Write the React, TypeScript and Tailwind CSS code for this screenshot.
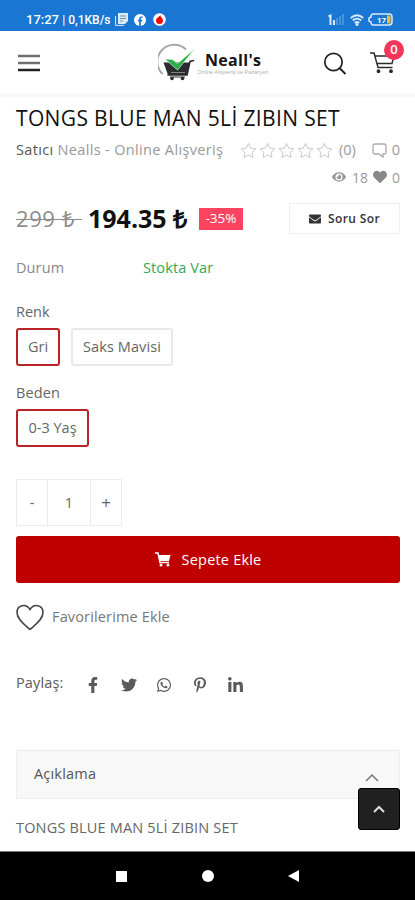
import React from "react";
import { FaEye, FaHeart, FaEnvelope, FaFacebookF, FaTwitter, FaWhatsapp, FaPinterestP, FaLinkedinIn } from "react-icons/fa";

function Logo() {
  return (
    <svg width="38" height="38" viewBox="0 0 38 38" className="shrink-0" fill="none">
      <path d="M4.500 31A15 15 0 0 1 28 6.500" stroke="#a3a8ad" strokeWidth="2" />
      <path d="M5.500 19.500H32L29 32H10Z" fill="#2b2c2f" />
      <path d="M35.500 17.500L32 18.500L29 32H10" stroke="#2b2c2f" strokeWidth="1.600" strokeLinecap="round" />
      <path d="M13 29.500H27" stroke="#999" strokeWidth=".8" />
      <circle cx="14" cy="35.500" r="1.800" fill="#2b2c2f" />
      <circle cx="24.500" cy="35.500" r="1.800" fill="#2b2c2f" />
      <path d="M12 34H27" stroke="#2b2c2f" strokeWidth="1" />
      <path d="M7 16L14.500 16.500L19.500 20.500L37 5.500L19.500 27Z" fill="#27ae45" stroke="#fff" strokeWidth="0.600" />
    </svg>
  );
}

function StatusBar() {
  return (
    <div className="flex h-[31px] items-center bg-[#1976d2] pt-[8px] pl-[26px] pr-[22px] text-white">
      <span className="w-[88px] whitespace-nowrap font-['Roboto'] text-[13px] font-medium leading-4">17:27 <span className="text-[12px]">| 0,1KB/s</span></span>
      <svg width="13" height="13" viewBox="0 0 13 13" className="ml-[1px]">
        <path d="M3 0H13V8L10 11H3Z" fill="#dcecfa" />
        <path d="M5 3H11M5 5.500H11M5 8H8" stroke="#6b8fb0" fill="none" />
        <path d="M.6 3V12.400H9" stroke="#dcecfa" fill="none" />
      </svg>
      <svg width="12" height="12" viewBox="0 0 12 12" className="ml-[6px]">
        <circle cx="6" cy="6" r="6" fill="#fff" />
        <path d="M6 12V4.800Q6 3 8.500 3M4 6.600H8.300" stroke="#1976d2" strokeWidth="1.700" fill="none" />
      </svg>
      <svg width="13" height="13" viewBox="0 0 13 13" className="ml-[7px]">
        <circle cx="6.500" cy="6.500" r="6.300" fill="#fff" />
        <path d="M7.500 2C7 4 10 5 10 7.500A3.500 3.500 0 0 1 3 7.500C3 5 6 4 7.500 2Z" fill="#f00b0b" />
      </svg>
      <svg width="16" height="12" viewBox="0 0 16 12" className="ml-auto">
        <path d="M.5 2.500L2.500 1.500V11M6 6V11" stroke="#d9eafa" strokeWidth="2" fill="none" />
        <path d="M9 4V11M12 2V11M15 0V11" stroke="#69a6e4" strokeWidth="1.200" />
      </svg>
      <svg width="14" height="12" viewBox="0 0 14 12" className="ml-[6px]" fill="none" stroke="#d9eafa" strokeWidth="1.700">
        <path d="M.7 4Q7-1.500 13.300 4M2.800 6.500Q7 2.800 11.200 6.500M4.800 9Q7 7 9.200 9" />
        <circle cx="7" cy="10.500" r=".7" fill="#fff" />
      </svg>
      <svg width="25" height="13" viewBox="0 0 25 13" className="ml-[4px]">
        <path d="M5 1H21Q24 1 24 4V9Q24 12 21 12H5Q3 12 3 9L1 8V5L3 4Q3 1 5 1Z" fill="none" stroke="#d9eafa" strokeWidth="1.500" />
        <path d="M19 2.500H21.500Q22.500 2.500 22.500 4V9Q22.500 10.500 21.500 10.500H19Z" fill="#f5b934" />
        <text x="9" y="9.500" fill="#fff" fontSize="8" fontWeight="700" fontFamily="Roboto">17</text>
      </svg>
    </div>
  );
}

function Header() {
  return (
    <header className="flex h-[66px] items-center border-b-[4px] border-[#f8f8f8] pl-[17px] pr-[15px]">
      <svg width="24" height="18" viewBox="0 0 24 18" className="mt-[2px]">
        <path d="M1 2H23" stroke="#6e6e6e" strokeWidth="2.500" />
        <path d="M1 9H23" stroke="#6e6e6e" strokeWidth="2.500" />
        <path d="M1 16H23" stroke="#222" strokeWidth="2.500" />
      </svg>
      <div className="ml-[117px] flex items-center">
        <Logo />
        <div className="w-[74px] whitespace-nowrap pt-[3px]">
          <div className="pl-[9px] font-['Open_Sans'] text-[16px] font-bold leading-[16px] tracking-[0.3px] text-[#151515]">Neall's</div>
          <div className="pl-[1px] font-['Liberation_Sans'] text-[5.6px] leading-[8px] text-[#b0b0b0]">Online Alışveriş ve Pazaryeri</div>
        </div>
      </div>
      <svg width="24" height="24" viewBox="0 0 24 24" className="ml-auto mt-[3px]" fill="none" stroke="#222" strokeWidth="1.700">
        <circle cx="10.500" cy="10" r="8.700" />
        <path d="M16.500 16L22.500 22" strokeWidth="2" />
      </svg>
      <div className="relative ml-[23px] mt-[2px] h-[24px] w-[30px]">
        <svg width="26" height="24" viewBox="0 0 26 24" fill="none" stroke="#2a2a2a" strokeWidth="1.400">
          <path d="M0 2H4L8 16.500H22.500M5 5H24L22 12.500H7" />
          <circle cx="8.500" cy="20.200" r="1.200" fill="#222" />
          <circle cx="21" cy="20.200" r="1.200" fill="#222" />
        </svg>
        <span className="absolute -top-[11px] left-[14px] flex size-[20px] items-center justify-center rounded-full bg-[#f4365a] text-[13px] font-semibold text-white">0</span>
      </div>
    </header>
  );
}

function Star() {
  return (
    <svg width="19" height="17" viewBox="0 0 19 17" fill="none" stroke="#c9c9c9">
      <path d="M9.500 1.500L11.700 6.100L16.900 6.800L13.100 10.400L14 15.500L9.500 13L5 15.500L5.900 10.400L2.100 6.800L7.300 6.100Z" />
    </svg>
  );
}

function CartIcon() {
  return (
    <svg width="16" height="15" viewBox="0 0 16 15" fill="none" stroke="#fff">
      <path d="M0 1H3L5 10.500H14" strokeWidth="1.500" />
      <path d="M3.500 3H15.500L14 9H4.700Z" fill="#fff" stroke="none" />
      <circle cx="6" cy="13" r="1.500" fill="#fff" stroke="none" />
      <circle cx="13" cy="13" r="1.500" fill="#fff" stroke="none" />
    </svg>
  );
}

export default function App() {
  return (
    <div className="flex h-[900px] w-[415px] flex-col overflow-hidden bg-white font-['Open_Sans',sans-serif] text-[14.5px] text-[#666]">
      <StatusBar />
      <Header />
      <main className="flex h-[754px] shrink-0 flex-col whitespace-nowrap pl-[16px] pr-[15px]">
        <h1 className="h-[42px] text-[21px] leading-[42px] tracking-[0.36px] text-[#111]">TONGS BLUE MAN 5Lİ ZIBIN SET</h1>
        <div className="flex h-[24px] items-center pb-[2px] text-[#999]">
          <span className="w-[223px] tracking-[0.34px]"><span className="text-[#555]">Satıcı</span> Nealls - Online Alışveriş</span>
          <div className="flex">
            <Star /><Star /><Star /><Star /><Star />
          </div>
          <span className="ml-[5px]">(0)</span>
          <svg width="15" height="15" viewBox="0 0 15 15" className="ml-auto mr-[5px]" fill="none" stroke="#aaa" strokeWidth="1.300">
            <path d="M3 1H12Q14 1 14 3V9Q14 11 12 11H11V14L7 11H3Q1 11 1 9V3Q1 1 3 1Z" />
          </svg>
          <span>0</span>
        </div>
        <div className="mt-[2px] flex h-[24px] items-center justify-end text-[#999]">
          <FaEye size={14} />
          <span className="ml-[6px] text-[14px]">18</span>
          <FaHeart size={14} className="ml-[5px] mr-[5px] text-[#888]" />
          <span className="text-[14px]">0</span>
        </div>
        <div className="mt-[14px] flex h-[31px] items-center">
          <span className="w-[72px]"><span className="whitespace-pre text-[22px] tracking-[0.6px] text-[#8c8c8c] line-through decoration-1">299 ₺ </span></span>
          <span className="w-[111px] text-[25px] font-bold text-[#111]">194.35 ₺</span>
          <span className="flex h-[22px] w-[44px] items-center justify-center bg-[#fb4560] text-[13.5px] text-white">-35%</span>
          <button className="ml-auto flex h-[31px] w-[111px] items-center justify-center gap-[7px] border border-[#eee] text-[12px] font-semibold tracking-[0.4px] text-[#333]">
            <FaEnvelope size={12} />Soru Sor
          </button>
        </div>
        <div className="mt-[22px] flex h-[24px] items-center">
          <span className="w-[127px] tracking-[0.1px] text-[#888]">Durum</span>
          <span className="tracking-[0.12px] text-[#34a853]">Stokta Var</span>
        </div>
        <div className="mt-[20px] flex h-[24px] items-center">Renk</div>
        <div className="mt-[4px] flex gap-[11px]">
          <button className="h-[38px] w-[44px] rounded-[3px] border-2 border-[#b92327]">Gri</button>
          <button className="h-[38px] w-[102px] rounded-[3px] border-2 border-[#e9e9e9] tracking-[0.1px]">Saks Mavisi</button>
        </div>
        <div className="mt-[15px] flex h-[24px] items-center tracking-[0.15px]">Beden</div>
        <button className="mt-[4px] h-[38px] w-[73px] rounded-[3px] border-2 border-[#b92327]">0-3 Yaş</button>
        <div className="mt-[32px] flex h-[47px] w-[106px] shrink-0 items-center border border-[#ededed] text-center">
          <span className="w-[30px]">-</span>
          <span className="flex h-full w-[44px] items-center justify-center border-x border-[#ededed]">1</span>
          <span className="w-[30px] text-[17px]">+</span>
        </div>
        <button className="mt-[10px] flex h-[47px] shrink-0 items-center justify-center gap-[11px] rounded-[3px] bg-[#be0000] font-medium tracking-[0.2px] text-white">
          <CartIcon />Sepete Ekle
        </button>
        <div className="mt-[20px] flex h-[28px] items-center gap-[8px] tracking-[0.15px] text-[#777]">
          <svg width="28" height="27" viewBox="0 0 28 27" fill="none" stroke="#444" strokeWidth="1.600">
            <path d="M14 25.500C9 21 1 15.500 1 8.500C1 1 10-1 14 5.500C18-1 27 1 27 8.500C27 15.500 19 21 14 25.500Z" />
          </svg>
          Favorilerime Ekle
        </div>
        <div className="mt-[38px] flex h-[28px] items-center text-[#5a5a5a]">
          <span className="w-[69px] tracking-[0.15px]">Paylaş:</span>
          <div className="flex gap-[19.5px] pt-[4px]">
            <FaFacebookF size={16} /><FaTwitter size={16} /><FaWhatsapp size={16} /><FaPinterestP size={16} /><FaLinkedinIn size={17} />
          </div>
        </div>
        <div className="relative mt-[53px] flex h-[49px] shrink-0 items-center justify-between border border-[#eee] bg-[#f8f8f8] pl-[17px] pr-[20px] text-[#555]">
          <span className="pb-[2px] tracking-[0.2px]">Açıklama</span>
          <svg width="14" height="9" viewBox="0 0 14 9" className="mt-[6px]" fill="none" stroke="#777" strokeWidth="1.500"><path d="M1 8L7 2L13 8" /></svg>
          <button className="absolute -right-px top-[37px] flex size-[42px] items-center justify-center rounded-[3px] border border-black bg-[#202020]">
            <svg width="12" height="8" viewBox="0 0 12 8" fill="none" stroke="#ddd" strokeWidth="2"><path d="M1 7L6 2L11 7" /></svg>
          </button>
        </div>
        <p className="mt-[17px] leading-[24px] tracking-[0.18px]">TONGS BLUE MAN 5Lİ ZIBIN SET</p>
      </main>
      <nav className="flex h-[49px] shrink-0 items-center border-t border-[#777] bg-black pl-[116px]">
        <span className="size-[11px] bg-white" />
        <span className="ml-[75px] size-[12px] rounded-full bg-white" />
        <svg width="11" height="12" viewBox="0 0 11 12" className="ml-[74px]"><path d="M11 0V12L0 6Z" fill="#fff" /></svg>
      </nav>
    </div>
  );
}
